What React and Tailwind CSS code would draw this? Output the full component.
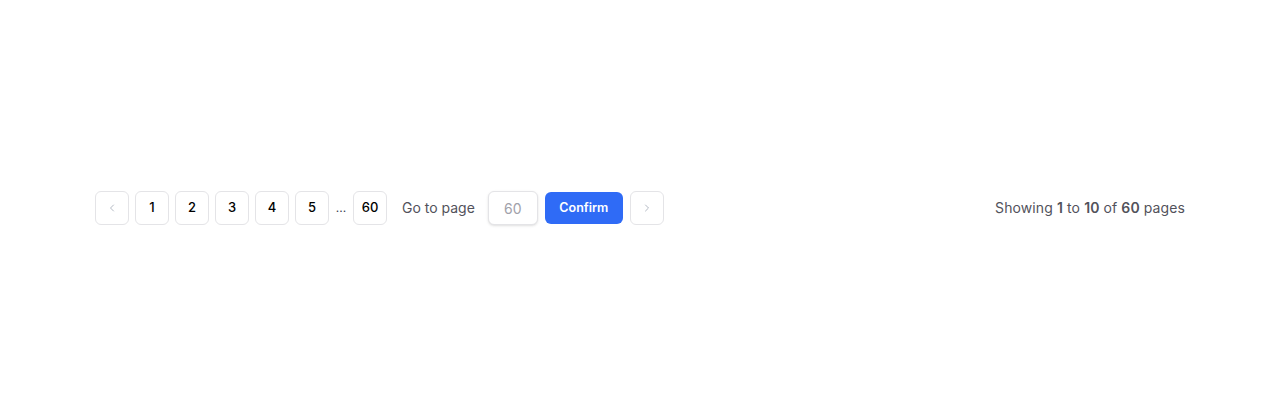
import React from 'react';
import { ChevronLeft, ChevronRight } from 'lucide-react';

const PageButton = ({ children, className = '' }) => (
  <button
    className={`flex h-[34px] w-[34px] items-center justify-center rounded-md border border-[#e4e4e7] bg-white text-[13px] font-medium text-black ${className}`}
  >
    {children}
  </button>
);

export default function App() {
  const pages = [1, 2, 3, 4, 5];

  return (
    <div
      className="flex min-h-screen w-full items-center bg-white px-[95px] py-0"
      style={{ fontFamily: 'Inter, "Noto Sans", sans-serif' }}
    >
      <div className="flex w-full items-center justify-between">
        <div className="flex items-center">
          <div className="flex items-center gap-[6px]">
            <PageButton>
              <ChevronLeft className="h-3 w-3 text-gray-400" strokeWidth={1.5} />
            </PageButton>
            {pages.map((p) => (
              <PageButton key={p}>{p}</PageButton>
            ))}
            <span className="w-[12px] text-center text-[12px] text-gray-700">...</span>
            <PageButton>60</PageButton>
          </div>
          <span className="ml-[15px] text-sm text-[#52525b]">Go to page</span>
          <input
            type="text"
            placeholder="60"
            className="ml-[13px] h-[34px] w-[50px] rounded-md border border-[#e4e4e7] bg-white text-center text-sm text-gray-500 placeholder:text-[#a1a1aa] shadow-sm outline-none"
          />
          <button className="ml-[7px] h-[32px] w-[78px] rounded-md bg-[#2f6bf6] text-[12.5px] font-semibold text-white">
            Confirm
          </button>
          <PageButton className="ml-[7px]">
            <ChevronRight className="h-3 w-3 text-gray-400" strokeWidth={1.5} />
          </PageButton>
        </div>
        <p className="text-sm tracking-[0.1px] text-[#52525b]">
          Showing <span className="font-semibold">1</span> to{' '}
          <span className="font-semibold">10</span> of{' '}
          <span className="font-semibold">60</span> pages
        </p>
      </div>
    </div>
  );
}
